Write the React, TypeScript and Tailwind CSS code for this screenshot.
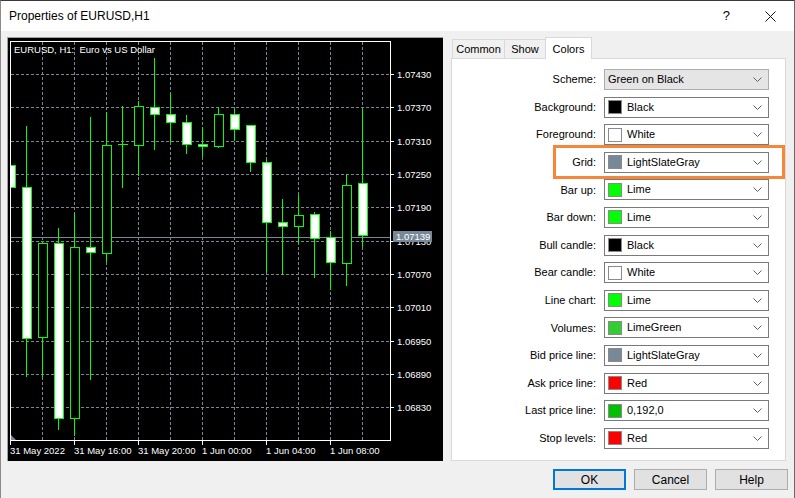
import React from 'react';

const UI_FONT = { fontFamily: '"Liberation Sans", Arial, sans-serif' };

// wick x = 10 + 16 * index; [high, bodyTop, bodyBottom, low, bull]
const CANDLES: Array<[number, number, number, number, boolean]> = [
  [165, 165, 187, 187, false],
  [126, 187, 338, 376, false],
  [243, 243, 337, 376, true],
  [228, 243, 418, 429, false],
  [213, 247, 418, 435, true],
  [117, 247, 252, 379, false],
  [112, 145, 253, 261, true],
  [106, 144, 144, 187, true],
  [101, 106, 145, 175, true],
  [58, 107, 114, 149, false],
  [93, 114, 122, 141, false],
  [115, 122, 144, 153, false],
  [127, 144, 146, 156, false],
  [107, 114, 146, 147, true],
  [109, 114, 129, 140, false],
  [125, 125, 162, 171, false],
  [159, 162, 222, 272, false],
  [199, 222, 226, 274, false],
  [195, 215, 226, 243, true],
  [212, 214, 238, 277, false],
  [231, 237, 262, 289, false],
  [174, 185, 263, 285, true],
  [109, 183, 235, 246, false],
];

const PRICE_LINES: Array<[number, string]> = [
  [74, '1.07430'],
  [107, '1.07370'],
  [141, '1.07310'],
  [174, '1.07250'],
  [207, '1.07190'],
  [241, '1.07130'],
  [274, '1.07070'],
  [307, '1.07010'],
  [341, '1.06950'],
  [374, '1.06890'],
  [407, '1.06830'],
];

const DATES: Array<[number, string]> = [
  [10, '31 May 2022'],
  [74, '31 May 16:00'],
  [138, '31 May 20:00'],
  [202, '1 Jun 00:00'],
  [266, '1 Jun 04:00'],
  [330, '1 Jun 08:00'],
];

const ROWS: Array<{ label: string; color: string | null; name: string }> = [
  { label: 'Scheme:', color: null, name: 'Green on Black' },
  { label: 'Background:', color: '#000000', name: 'Black' },
  { label: 'Foreground:', color: '#ffffff', name: 'White' },
  { label: 'Grid:', color: '#778899', name: 'LightSlateGray' },
  { label: 'Bar up:', color: '#00ff00', name: 'Lime' },
  { label: 'Bar down:', color: '#00ff00', name: 'Lime' },
  { label: 'Bull candle:', color: '#000000', name: 'Black' },
  { label: 'Bear candle:', color: '#ffffff', name: 'White' },
  { label: 'Line chart:', color: '#00ff00', name: 'Lime' },
  { label: 'Volumes:', color: '#32cd32', name: 'LimeGreen' },
  { label: 'Bid price line:', color: '#778899', name: 'LightSlateGray' },
  { label: 'Ask price line:', color: '#ff0000', name: 'Red' },
  { label: 'Last price line:', color: '#00c000', name: '0,192,0' },
  { label: 'Stop levels:', color: '#ff0000', name: 'Red' },
];

function Chart() {
  const chartFont = '"Liberation Sans", Arial, sans-serif';
  return (
    <div className="w-[436px] h-[424px] bg-black border-l border-t border-[#a0a0a0] shrink-0">
      <svg width="435" height="423" viewBox="8 38 435 423" className="block">
        <defs>
          <clipPath id="plot">
            <rect x="11" y="42" width="379" height="398" />
          </clipPath>
          {/* the 1.07130 label sits mostly under the bid price tag */}
          <clipPath id="underBid">
            <rect x="390" y="242" width="53" height="10" />
          </clipPath>
        </defs>

        {/* grid */}
        {Array.from({ length: 11 }).map((_, i) => (
          <line
            key={'v' + i}
            x1={42.5 + 32 * i}
            x2={42.5 + 32 * i}
            y1={42}
            y2={440}
            stroke="#778899"
            strokeDasharray="3 2"
          />
        ))}
        {PRICE_LINES.map(([y]) => (
          <line key={'h' + y} x1={11} x2={390} y1={y + 0.5} y2={y + 0.5} stroke="#778899" strokeDasharray="3 2" />
        ))}

        {/* bid line */}
        <line x1={11} x2={390} y1={237.5} y2={237.5} stroke="#778899" />

        {/* candles */}
        <g clipPath="url(#plot)">
          {CANDLES.map(([hi, top, bot, lo, bull], i) => {
            const x = 10 + 16 * i;
            return (
              <g key={i}>
                {i > 0 && <line x1={x + 0.5} x2={x + 0.5} y1={hi} y2={lo + 1} stroke="#00ff00" />}
                {top === bot ? (
                  <line x1={x - 4} x2={x + 6} y1={top + 0.5} y2={top + 0.5} stroke="#00ff00" />
                ) : (
                  <rect
                    x={x - 3.5}
                    y={top + 0.5}
                    width={9}
                    height={bot - top}
                    fill={bull ? '#000000' : '#ffffff'}
                    stroke="#00ff00"
                  />
                )}
              </g>
            );
          })}
        </g>

        {/* frame */}
        <rect x={10.5} y={41.5} width={380} height={399} fill="none" stroke="#ffffff" />

        {/* shift marker */}
        <polygon points="11,435 11,440 16,440" fill="#778899" />

        {/* price axis */}
        {PRICE_LINES.map(([y, label]) => (
          <g key={'p' + y}>
            <line x1={390} x2={394} y1={y + 0.5} y2={y + 0.5} stroke="#ffffff" />
            <text
              x={397}
              y={y + 4}
              fill="#ffffff"
              fontSize="9.5"
              fontFamily={chartFont}
              clipPath={label === '1.07130' ? 'url(#underBid)' : undefined}
            >
              {label}
            </text>
          </g>
        ))}
        <rect x={393} y={231} width={39} height={11} fill="#778899" />
        <text x={396} y={240} fill="#ffffff" fontSize="9.5" fontFamily={chartFont}>
          1.07139
        </text>

        {/* time axis */}
        {DATES.map(([x, label]) => (
          <g key={label}>
            <line x1={x + 0.5} x2={x + 0.5} y1={440} y2={445} stroke="#ffffff" />
            <text x={x} y={453.5} fill="#ffffff" fontSize="9.5" fontFamily={chartFont}>
              {label}
            </text>
          </g>
        ))}

        <text x={14} y={52.5} fill="#ffffff" fontSize="9.5" fontFamily={chartFont} xmlSpace="preserve">
          EURUSD, H1:  Euro vs US Dollar
        </text>
      </svg>
    </div>
  );
}

function Chevron() {
  return (
    <svg width="9" height="5" viewBox="0 0 9 5" className="block">
      <polyline points="0.5,0.5 4.5,4.5 8.5,0.5" fill="none" stroke="#606060" strokeWidth="1" />
    </svg>
  );
}

function ColorRow({ label, color, name }: { label: string; color: string | null; name: string }) {
  const isScheme = color === null;
  return (
    <div className="relative flex items-center h-[21px]">
      <div className="w-[145px] text-right pr-[1px] text-[11px] text-black">{label}</div>
      <div
        className={
          isScheme
            ? 'ml-[7px] w-[165px] h-[21px] flex items-center pl-[3px] pr-[6px] border border-[#adadad] bg-[#e5e5e5]'
            : 'ml-[7px] w-[165px] h-[21px] flex items-center pl-[3px] pr-[6px] border border-[#7a7a7a] bg-white'
        }
      >
        {!isScheme && (
          <span
            className="w-[14px] h-[14px] border border-[#8a8a8a] shrink-0 mr-[5px]"
            style={{ backgroundColor: color as string }}
          />
        )}
        <span className="text-[11px] text-black flex-1 leading-none">{name}</span>
        <Chevron />
      </div>
      {label === 'Grid:' && (
        <div className="absolute left-[101px] top-[-7px] w-[232px] h-[34px] border-[3px] border-[#f5863a] pointer-events-none" />
      )}
    </div>
  );
}

export default function App() {
  return (
    <div
      className="w-[795px] h-[498px] bg-[#f0f0f0] border-l border-r border-t border-l-[#8a8a8a] border-r-[#6a6a6a] border-t-[#3a3a3a] flex flex-col overflow-hidden"
      style={UI_FONT}
    >
      {/* title bar */}
      <div className="h-[30px] bg-white flex items-center shrink-0">
        <span className="pl-[8px] text-[12px] text-black">Properties of EURUSD,H1</span>
        <span className="ml-auto text-[13px] text-black mr-[35px]">?</span>
        <svg width="11" height="11" viewBox="0 0 11 11" className="mr-[18px]">
          <line x1="0.5" y1="0.5" x2="10.5" y2="10.5" stroke="#111" />
          <line x1="10.5" y1="0.5" x2="0.5" y2="10.5" stroke="#111" />
        </svg>
      </div>

      {/* body */}
      <div className="flex pl-[6px] pt-[6px]">
        <Chart />

        <div className="ml-[8px] pt-[1px] flex flex-col">
          {/* tabs */}
          <div className="flex items-end h-[20px] relative z-10">
            <div className="ml-[1px] w-[53px] h-[19px] border border-b-0 border-[#d9d9d9] bg-[#f0f0f0] flex items-center justify-center text-[11px] text-black">
              Common
            </div>
            <div className="w-[41px] h-[19px] border-t border-r border-[#d9d9d9] bg-[#f0f0f0] flex items-center justify-center text-[11px] text-black">
              Show
            </div>
            <div className="-ml-[1px] w-[47px] h-[22px] -mb-[1px] border border-b-0 border-[#d9d9d9] bg-white flex items-start pt-[3px] justify-center text-[11px] text-black">
              Colors
            </div>
          </div>

          {/* panel */}
          <div className="w-[335px] h-[403px] border border-[#d9d9d9] bg-white pt-[10px] flex flex-col gap-[6.6px]">
            {ROWS.map((r) => (
              <ColorRow key={r.label} label={r.label} color={r.color} name={r.name} />
            ))}
          </div>
        </div>
      </div>

      {/* buttons */}
      <div className="flex justify-end gap-[8px] pr-[6px] mt-[8px]">
        <button className="w-[73px] h-[21px] border-2 border-[#0078d7] bg-[#e1e1e1] text-[12px] text-black">OK</button>
        <button className="w-[73px] h-[21px] border border-[#adadad] bg-[#e1e1e1] text-[12px] text-black">Cancel</button>
        <button className="w-[73px] h-[21px] border border-[#adadad] bg-[#e1e1e1] text-[12px] text-black">Help</button>
      </div>
    </div>
  );
}
